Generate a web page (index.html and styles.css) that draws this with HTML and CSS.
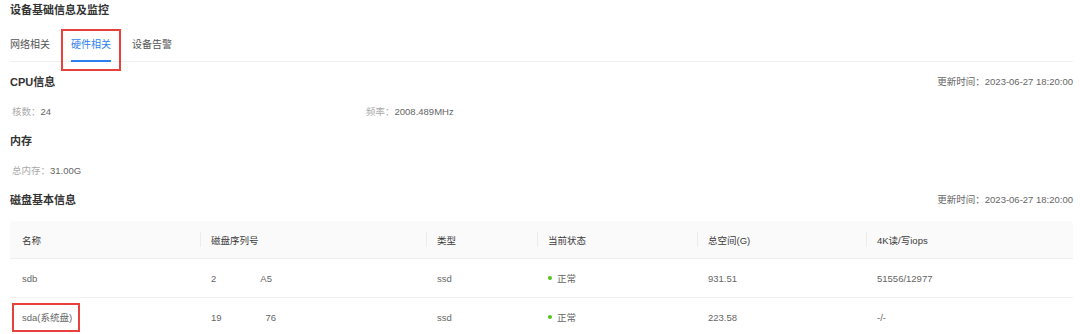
FILE: index.html
```html
<!DOCTYPE html>
<html lang="zh-CN">
<head>
    <meta charset="UTF-8">
    <meta name="viewport" content="width=device-width, initial-scale=1.0">
    <title>设备基础信息及监控</title>
    <link rel="stylesheet" href="styles.css">
</head>
<body>
    <div class="page">
        <div class="page-title">设备基础信息及监控</div>

        <div class="tabs">
            <div class="tab">网络相关</div>
            <div class="tab active">硬件相关</div>
            <div class="tab">设备告警</div>
        </div>

        <div class="section-head first">
            <span class="section-title">CPU信息</span>
            <span class="update-time">更新时间：2023-06-27 18:20:00</span>
        </div>
        <div class="info-row">
            <div class="info-item"><span class="label">核数：</span>24</div>
            <div class="info-item"><span class="label">频率：</span>2008.489MHz</div>
        </div>

        <div class="section-head">
            <span class="section-title">内存</span>
        </div>
        <div class="info-row">
            <div class="info-item"><span class="label">总内存：</span>31.00G</div>
        </div>

        <div class="section-head">
            <span class="section-title">磁盘基本信息</span>
            <span class="update-time">更新时间：2023-06-27 18:20:00</span>
        </div>

        <table class="disk-table">
            <colgroup>
                <col style="width: 190px">
                <col style="width: 226px">
                <col style="width: 111px">
                <col style="width: 160px">
                <col style="width: 169px">
                <col>
            </colgroup>
            <thead>
                <tr>
                    <th>名称</th>
                    <th>磁盘序列号</th>
                    <th>类型</th>
                    <th>当前状态</th>
                    <th>总空间(G)</th>
                    <th>4K读/写iops</th>
                </tr>
            </thead>
            <tbody>
                <tr>
                    <td>sdb</td>
                    <td><span class="serial">2</span><span class="serial-end">A5</span></td>
                    <td>ssd</td>
                    <td><span class="dot"></span>正常</td>
                    <td>931.51</td>
                    <td>51556/12977</td>
                </tr>
                <tr>
                    <td><span class="marked">sda(系统盘)</span></td>
                    <td><span class="serial">19</span><span class="serial-end">76</span></td>
                    <td>ssd</td>
                    <td><span class="dot"></span>正常</td>
                    <td>223.58</td>
                    <td>-/-</td>
                </tr>
            </tbody>
        </table>
    </div>
</body>
</html>
```

FILE: styles.css
```css
body {
    margin: 0;
    background: #fff;
    font-family: "Liberation Sans", "Noto Sans CJK SC", sans-serif;
    font-size: 9.5px;
    color: #666;
}
.page {
    padding: 0 7px 0 10px;
}
.page-title {
    height: 20px;
    line-height: 20px;
    font-size: 11px;
    font-weight: bold;
    color: #333;
    margin-bottom: 9px;
}
.tabs {
    display: flex;
    gap: 21px;
    height: 32px;
    border-bottom: 1px solid #f0f0f0;
}
.tab {
    position: relative;
    line-height: 32px;
    font-size: 10px;
    color: #555;
}
.tab.active {
    color: #2d7ff0;
}
.tab.active::before {
    content: "";
    position: absolute;
    left: 0;
    right: 0;
    bottom: -1px;
    height: 2px;
    background: #2d7ff0;
}
.tab.active::after {
    content: "";
    position: absolute;
    left: -10px;
    right: -10px;
    top: 0;
    height: 42px;
    border: 2px solid #e8403a;
    box-sizing: border-box;
}
.section-head {
    display: flex;
    justify-content: space-between;
    align-items: center;
    height: 32px;
}
.section-head.first {
    margin-top: 3px;
}
.section-title {
    font-size: 11px;
    font-weight: bold;
    color: #333;
}
.update-time {
    color: #666;
}
.info-row {
    display: flex;
    height: 24px;
    line-height: 24px;
    margin-top: 3px;
    padding-left: 2px;
}
.info-item {
    width: 354px;
    color: #666;
}
.label {
    color: #aaa;
}
.disk-table {
    width: 100%;
    margin-top: 6px;
    border-collapse: separate;
    border-spacing: 0;
    table-layout: fixed;
}
.disk-table th {
    position: relative;
    height: 37px;
    padding: 0 11px;
    background: #fafafa;
    text-align: left;
    font-weight: normal;
    color: #3a3a3a;
    border-bottom: 1px solid #f0f0f0;
}
.disk-table th:first-child {
    border-top-left-radius: 4px;
    padding-left: 12px;
}
.disk-table th:last-child {
    border-top-right-radius: 4px;
}
.disk-table th + th::before {
    content: "";
    position: absolute;
    left: 0;
    top: 11px;
    width: 1px;
    height: 15px;
    background: #ececec;
}
.disk-table td {
    height: 38px;
    padding: 0 11px;
    border-bottom: 1px solid #f0f0f0;
    color: #666;
}
.disk-table td:first-child {
    padding-left: 12px;
}
.serial-end {
    margin-left: 44px;
}
.dot {
    display: inline-block;
    width: 4px;
    height: 4px;
    border-radius: 50%;
    background: #52c41a;
    margin-right: 5px;
    vertical-align: middle;
    position: relative;
    top: -1px;
}
.marked {
    display: inline-block;
    line-height: 15px;
    padding: 5px 6px 5px 8px;
    margin-left: -10px;
    border: 2px solid #e8403a;
}
```
